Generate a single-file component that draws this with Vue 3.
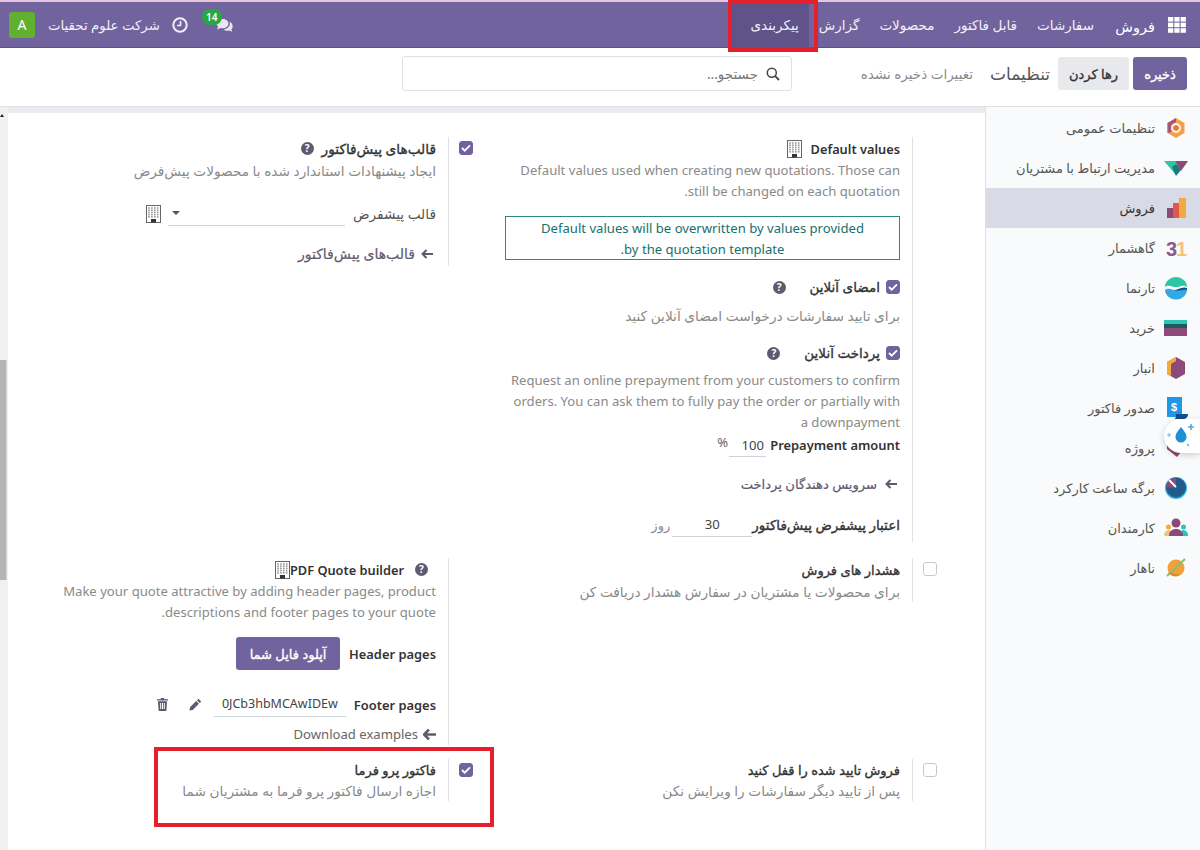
<template>
  <div class="app" dir="rtl">
    <nav class="topbar">
      <div class="nav-main">
        <span class="apps">
          <svg width="18" height="16" viewBox="0 0 18 16">
            <g fill="#fff">
              <rect v-for="c in gridCells" :key="c.k" :x="c.x" :y="c.y" width="5.300" height="4.600" />
            </g>
          </svg>
        </span>
        <span class="brand">فروش</span>
        <span v-for="item in navItems" :key="item" class="nav-item" :class="{ active: item === 'پیکربندی' }">{{ item }}</span>
      </div>
      <div class="systray">
        <span class="chat">
          <svg width="18" height="14" viewBox="0 0 18 14">
            <path d="M6.500 1C3.200 1 .6 3 .6 5.500c0 1.200.6 2.300 1.600 3.100L1 11.500l3.300-1.500c.7.200 1.400.3 2.200.3 3.300 0 5.900-2 5.900-4.800S9.800 1 6.500 1z" fill="#e9e6f2" />
            <path d="M13.500 3.500c.3.600.4 1.300.4 2 0 3-2.700 5.500-6.300 5.900 1 .9 2.400 1.400 3.900 1.400.6 0 1.200-.1 1.700-.2l3 1.200-.9-2.500c.9-.8 1.400-1.800 1.400-2.900 0-2-1.300-3.800-3.200-4.900z" fill="#e9e6f2" />
          </svg>
          <b class="badge">14</b>
        </span>
        <svg class="clock" width="16" height="16" viewBox="0 0 16 16">
          <circle cx="8" cy="8" r="6.700" fill="none" stroke="#f1eff6" stroke-width="2" />
          <path d="M8.500 4v4.500H5" fill="none" stroke="#f1eff6" stroke-width="1.600" />
        </svg>
        <span class="company">شرکت علوم تحقیات</span>
        <span class="avatar">A</span>
      </div>
    </nav>

    <header class="control">
      <div class="control-left">
        <button class="btn btn-save">ذخیره</button>
        <button class="btn btn-discard">رها کردن</button>
        <span class="page-title">تنظیمات</span>
        <span class="unsaved">تغییرات ذخیره نشده</span>
      </div>
      <div class="search">
        <svg width="14" height="14" viewBox="0 0 14 14">
          <circle cx="5.800" cy="5.800" r="4.500" fill="none" stroke="#444" stroke-width="1.500" />
          <path d="M9.200 9.200L13 13" stroke="#444" stroke-width="1.800" />
        </svg>
        <span>جستجو...</span>
      </div>
    </header>

    <div class="body">
      <aside class="sidebar">
        <div v-for="app in apps" :key="app.name" class="side-item" :class="{ selected: app.name === 'فروش' }">
          <svg class="side-icon" width="24" height="24" viewBox="0 0 24 24" v-html="app.icon"></svg>
          <span>{{ app.name }}</span>
        </div>
      </aside>

      <main class="content">
        <div class="settings">
          <!-- row 1 -->
          <div class="row row-one">
            <section class="cell">
              <div class="check-col"></div>
              <div class="pane tall">
                <div class="title">
                  <span class="en-title">Default values</span>
                  <svg class="bld" width="15" height="18" viewBox="0 0 15 18"><use href="#building" /></svg>
                </div>
                <p class="muted en">Default values used when creating new quotations. Those can still be changed on each quotation.</p>
                <div class="notice">Default values will be overwritten by values provided by the quotation template.</div>

                <div class="opt-title first-opt">
                  <span class="check on"><svg width="10" height="8" viewBox="0 0 10 8"><path d="M1 4l2.700 2.700L9 1.300" fill="none" stroke="#fff" stroke-width="1.800" /></svg></span>
                  <strong class="fa-bold">امضای آنلاین</strong>
                  <span class="help wide">?</span>
                </div>
                <p class="muted fa opt-desc">برای تایید سفارشات درخواست امضای آنلاین کنید</p>

                <div class="opt-title second-opt">
                  <span class="check on"><svg width="10" height="8" viewBox="0 0 10 8"><path d="M1 4l2.700 2.700L9 1.300" fill="none" stroke="#fff" stroke-width="1.800" /></svg></span>
                  <strong class="fa-bold">پرداخت آنلاین</strong>
                  <span class="help wide">?</span>
                </div>
                <p class="muted en pay-desc">Request an online prepayment from your customers to confirm orders. You can ask them to fully pay the order or partially with a downpayment</p>
                <div class="field-line prepay">
                  <strong>Prepayment amount</strong>
                  <span class="small-input w-100">100</span>
                  <span class="pct">%</span>
                </div>
                <div class="link pay-link">
                  <svg class="arrow" width="12" height="10" viewBox="0 0 12 10"><path d="M5.500 1L1.500 5l4 4M2 5h10" fill="none" stroke="#5f5a70" stroke-width="2" /></svg>
                  <span>سرویس دهندگان پرداخت</span>
                </div>
                <div class="field-line validity">
                  <strong class="fa-bold">اعتبار پیشفرض پیش‌فاکتور</strong>
                  <span class="small-input w-30">30</span>
                  <span class="muted-fa">روز</span>
                </div>
              </div>
            </section>

            <section class="cell">
              <div class="check-col"><span class="check on"><svg width="10" height="8" viewBox="0 0 10 8"><path d="M1 4l2.700 2.700L9 1.300" fill="none" stroke="#fff" stroke-width="1.800" /></svg></span></div>
              <div class="pane tpl-pane">
                <div class="title tpl-title">
                  <strong class="fa-bold">قالب‌های پیش‌فاکتور</strong>
                  <span class="help">?</span>
                </div>
                <p class="muted fa">ایجاد پیشنهادات استاندارد شده با محصولات پیش‌فرض</p>
                <div class="field-line tpl">
                  <span class="fa">قالب پیشفرض</span>
                  <span class="select"><i class="caret"></i></span>
                  <svg class="bld" width="15" height="18" viewBox="0 0 15 18"><use href="#building" /></svg>
                </div>
                <div class="link tpl-link">
                  <svg class="arrow" width="12" height="10" viewBox="0 0 12 10"><path d="M5.500 1L1.500 5l4 4M2 5h10" fill="none" stroke="#5f5a70" stroke-width="2" /></svg>
                  <span>قالب‌های پیش‌فاکتور</span>
                </div>
              </div>
            </section>
          </div>

          <!-- row 2 -->
          <div class="row row-two">
            <section class="cell">
              <div class="check-col"><span class="check"></span></div>
              <div class="pane">
                <div class="title"><strong class="fa-bold">هشدار های فروش</strong></div>
                <p class="muted fa">برای محصولات یا مشتریان در سفارش هشدار دریافت کن</p>
              </div>
            </section>

            <section class="cell">
              <div class="check-col"></div>
              <div class="pane">
                <div class="title pdf">
                  <span class="help first">?</span>
                  <span class="en-title" dir="ltr">PDF Quote builder</span>
                  <svg class="bld" width="15" height="18" viewBox="0 0 15 18"><use href="#building" /></svg>
                </div>
                <p class="muted en">Make your quote attractive by adding header pages, product descriptions and footer pages to your quote.</p>
                <div class="field-line head-pages">
                  <strong>Header pages</strong>
                  <button class="btn btn-upload">آپلود فایل شما</button>
                </div>
                <div class="field-line foot-pages">
                  <strong>Footer pages</strong>
                  <span class="small-input w-file" dir="ltr">0JCb3hbMCAwIDEw</span>
                  <svg class="tool pencil" width="13" height="13" viewBox="0 0 13 13"><path d="M9.500.8l2.700 2.700-1.500 1.500L8 2.300zM7.200 3.100l2.700 2.700-6.200 6.200L.5 12.500 1 9.300z" fill="#5f5a70" /></svg>
                  <svg class="tool trash" width="11" height="13" viewBox="0 0 11 13"><path d="M4 0h3l.5 1.200H11v1.300H0V1.200h3.500zM1 3.300h9l-.6 9.700H1.600zM3.200 5v6h1V5zm1.800 0v6h1V5zm1.800 0v6h1V5z" fill="#5f5a70" fill-rule="evenodd" /></svg>
                </div>
                <div class="link dl-link">
                  <svg class="arrow" width="13" height="11" viewBox="0 0 13 11"><path d="M6 .5L1 5.500l5 5M2 5.500h11" fill="none" stroke="#5f5a70" stroke-width="2.600" /></svg>
                  <span dir="ltr">Download examples</span>
                </div>
              </div>
            </section>
          </div>

          <!-- row 3 -->
          <div class="row row-three">
            <section class="cell">
              <div class="check-col"><span class="check"></span></div>
              <div class="pane">
                <div class="title"><strong class="fa-bold">فروش تایید شده را قفل کنید</strong></div>
                <p class="muted fa">پس از تایید دیگر سفارشات را ویرایش نکن</p>
              </div>
            </section>
            <section class="cell">
              <div class="check-col"><span class="check on"><svg width="10" height="8" viewBox="0 0 10 8"><path d="M1 4l2.700 2.700L9 1.300" fill="none" stroke="#fff" stroke-width="1.800" /></svg></span></div>
              <div class="pane">
                <div class="title"><strong class="fa-bold">فاکتور پرو فرما</strong></div>
                <p class="muted fa">اجازه ارسال فاکتور پرو فرما به مشتریان شما</p>
              </div>
            </section>
          </div>
        </div>
      </main>

      <div class="scroll-strip"><i class="scroll-up"></i><i class="thumb"></i></div>
    </div>

    <div class="drop-widget">
      <svg width="32" height="26" viewBox="0 0 32 26">
        <path d="M15 4c3 4 5.500 6.500 5.500 10a5.500 5.500 0 0 1-11 0C9.500 10.500 12 8 15 4z" fill="#1f8fd6" />
        <path d="M25 1v6M22 4h6" stroke="#5aa9d8" stroke-width="1.600" />
        <path d="M3 10v4M1 12h4" stroke="#7dbde0" stroke-width="1.200" />
        <circle cx="22" cy="22" r="1.200" fill="#7dbde0" />
      </svg>
    </div>

    <div class="mark mark-nav"></div>
    <div class="mark mark-row"></div>

    <svg width="0" height="0" class="defs">
      <symbol id="building" viewBox="0 0 15 18">
        <rect x=".5" y=".5" width="14" height="17" fill="#fff" stroke="#666" />
        <g fill="#999">
          <rect v-for="c in windowCells" :key="c.k" :x="c.x" :y="c.y" width="1.600" height="1.600" />
        </g>
        <rect x="5" y="14" width="5" height="3.500" fill="#333" />
      </symbol>
    </svg>
  </div>
</template>

<script setup>
const navItems = ['سفارشات', 'قابل فاکتور', 'محصولات', 'گزارش', 'پیکربندی']

const gridCells = []
for (let r = 0; r < 3; r++) {
  for (let c = 0; c < 3; c++) {
    gridCells.push({ k: r + '-' + c, x: c * 6.3, y: r * 5.6 })
  }
}

const windowCells = []
for (let r = 0; r < 5; r++) {
  for (let c = 0; c < 4; c++) {
    windowCells.push({ k: r + '-' + c, x: 2.2 + c * 2.9, y: 2.2 + r * 2.2 })
  }
}

const apps = [
  { name: 'تنظیمات عمومی', icon: '<path d="M12 2l8.500 5v10L12 22l-8.500-5V7z" fill="#f0a24a"/><path d="M3.500 7L12 2v4L7.500 9v7l-4 1z" fill="#a5567e"/><circle cx="12" cy="12" r="5" fill="#fbeedd"/><circle cx="12" cy="12" r="2.800" fill="#e8762c"/>' },
  { name: 'مدیریت ارتباط با مشتریان', icon: '<path d="M0 5h11l5 7-4 7z" fill="#2ec4a6"/><path d="M11 5h13l-7 10z" fill="#8c4a78"/><path d="M8 11l4-3 5 6-5 6z" fill="#1d7a78"/>' },
  { name: 'فروش', icon: '<rect x="3" y="12" width="7" height="10" fill="#8c4a78"/><rect x="9" y="7" width="7" height="15" fill="#e2574c"/><rect x="15" y="2" width="7" height="20" fill="#f4a93c"/>' },
  { name: 'گاهشمار', icon: '<text x="2" y="20" font-size="20" font-weight="700" font-family="Liberation Sans" fill="#8c5a8c" direction="ltr">3</text><text x="12" y="20" font-size="20" font-weight="700" font-family="Liberation Sans" fill="#f4c27a" direction="ltr">1</text>' },
  { name: 'تارنما', icon: '<path d="M1 11a11 10 0 0 1 22 0c-4-3-7 0-11 0S5 8 1 11z" fill="#2ec4a6"/><path d="M1 14c4-3 7 0 11 0s7-3 11-1a11 10 0 0 1-22 1z" fill="#32a9e4"/><path d="M10 14c4 0 8-4 13-2v2c-4-1-8 2-13 0z" fill="#1d4f80"/>' },
  { name: 'خرید', icon: '<rect x="0" y="4" width="23" height="5" fill="#2ec4b6"/><rect x="0" y="8" width="23" height="4" fill="#1d5a5e"/><rect x="0" y="12" width="23" height="8" fill="#8c4a78"/>' },
  { name: 'انبار', icon: '<path d="M12 1l9 5v12l-9 5-9-5V6z" fill="#8c4a78"/><path d="M12 1L3 6v12l4 2V8l5-3z" fill="#f4a93c"/>' },
  { name: 'صدور فاکتور', icon: '<path d="M3 1h15v20H3z" fill="#1f96e6"/><path d="M12 18h12c0 3-2 5-5 5h-9c2 0 2-3 2-5z" fill="#134d8c"/><text x="7" y="15" font-size="11" font-weight="700" font-family="Liberation Sans" fill="#fff" direction="ltr">$</text>' },
  { name: 'پروژه', icon: '<path d="M3 3h10l8 8-8 10-10-8z" fill="#8c4a78"/>' },
  { name: 'برگه ساعت کارکرد', icon: '<circle cx="12" cy="12" r="11" fill="#32b4e4"/><circle cx="12" cy="11.500" r="10" fill="#1f5c8c"/><path d="M2 11.500A10 10 0 0 1 12 1.500L12 11.500z" fill="#8c4a78"/><path d="M5 4l7 7" stroke="#fff" stroke-width="2"/>' },
  { name: 'کارمندان', icon: '<circle cx="12" cy="7" r="4.500" fill="#8c4a78"/><circle cx="4.500" cy="11" r="2.500" fill="#f4a93c"/><circle cx="19.500" cy="11" r="2.500" fill="#2ec4b6"/><path d="M0 20c0-5 3-6 6-6v6z" fill="#f4c27a"/><path d="M24 20c0-5-3-6-6-6v6z" fill="#2ec4b6"/><path d="M5 20c0-5 3-7 7-7s7 2 7 7z" fill="#8c4a78"/>' },
  { name: 'ناهار', icon: '<circle cx="12" cy="12" r="8.500" fill="#f0a13c"/><path d="M3 20L21 3" stroke="#8cbf6e" stroke-width="2"/><path d="M4 16a8.500 8.500 0 0 0 12 3z" fill="#d98a2c"/>' }
]
</script>

<style>
html,
body {
  margin: 0;
  background: #fff;
}
</style>

<style scoped>
.app {
  position: relative;
  width: 1200px;
  height: 850px;
  overflow: hidden;
  display: flex;
  flex-direction: column;
  font-family: "Noto Sans", "DejaVu Sans", sans-serif;
  font-size: 13.1px;
  color: #4a4a4a;
}

.defs {
  position: absolute;
}

.topbar {
  height: 45px;
  border-top: 2px solid #e8c4de;
  background: #71639e;
  border-bottom: 1px solid #5e5284;
  flex: none;
  display: flex;
  justify-content: space-between;
  align-items: stretch;
  color: #fff;
  padding: 0 14px 0 9px;
}

.nav-main {
  display: flex;
  align-items: center;
}

.apps {
  display: flex;
  width: 31px;
}

.brand {
  font-size: 14.500px;
  width: 51px;
  padding-top: 2px;
}

.nav-item {
  height: 100%;
  display: flex;
  align-items: center;
  padding: 0 10px;
  color: #f2f0f7;
  font-size: 13.500px;
}

.nav-item.active {
  background: #5f5389;
  padding-left: 20px;
}

.systray {
  display: flex;
  align-items: center;
  gap: 12px;
}

.chat {
  position: relative;
  display: flex;
  margin-left: 16px;
}

.badge {
  position: absolute;
  top: -9px;
  right: 12px;
  width: 20px;
  height: 16px;
  line-height: 16px;
  border-radius: 10px;
  background: #28a745;
  color: #fff;
  font-size: 10px;
  font-weight: 600;
  text-align: center;
}

.company {
  color: #f2f0f7;
  font-size: 13.300px;
}

.avatar {
  width: 26px;
  height: 26px;
  line-height: 26px;
  border-radius: 3px;
  background: #62b030;
  text-align: center;
  font-size: 14px;
  margin-right: 1px;
}

.control {
  height: 51px;
  flex: none;
  border-bottom: 1px solid #dee2e6;
  background: #fff;
  display: flex;
  align-items: center;
  padding: 0 13px 7px;
}

.control-left {
  width: 395px;
  display: flex;
  align-items: center;
}

.btn {
  border: 0;
  border-radius: 3px;
  font-family: inherit;
  font-size: 13px;
  font-weight: 400;
  -webkit-text-stroke: 0.35px currentColor;
  height: 33px;
  padding: 0;
}

.btn-save {
  width: 54px;
  background: #71639e;
  color: #fff;
}

.btn-discard {
  width: 71px;
  margin-right: 4px;
  background: #e7e9ed;
  color: #333;
}

.page-title {
  font-size: 17px;
  margin-right: 8px;
  color: #555;
}

.unsaved {
  margin-right: 17px;
  color: #8a8a8a;
  font-size: 13.500px;
}

.search {
  height: 33px;
  border: 1px solid #dee2e6;
  border-radius: 3px;
  display: flex;
  align-items: center;
  gap: 8px;
  padding: 0 11px;
  color: #777;
  font-size: 13.500px;
  width: 366px;
}

.body {
  flex: 1;
  display: flex;
  min-height: 0;
}

.sidebar {
  width: 214px;
  flex: none;
  background: #f9fafb;
  border-left: 1px solid #dee2e6;
  padding-top: 1px;
}

.side-item {
  height: 40px;
  display: flex;
  align-items: center;
  gap: 9px;
  padding-right: 12px;
  font-size: 13px;
  color: #555;
}

.side-item.selected {
  background: #d8dae6;
  color: #333;
}

.side-icon {
  flex: none;
}

.content {
  flex: 1;
  background: #fff;
  border-top: 6px solid #e9ecef;
  padding: 24px 48px 0 0;
}

.scroll-strip {
  width: 8px;
  flex: none;
  background: #f0f0f0;
  position: relative;
}

.scroll-up {
  position: absolute;
  top: 7px;
  left: 0;
  border-bottom: 3px solid #222;
  border-left: 2px solid transparent;
  border-right: 2px solid transparent;
}

.thumb {
  position: absolute;
  top: 253px;
  left: 0;
  width: 6px;
  height: 220px;
  background: #b5b5b5;
  border-right: 1px solid #d6d6d6;
}

.row {
  display: grid;
  grid-template-columns: 464px 464px;
}

.row-two {
  margin-top: 16px;
}

.row-three {
  margin-top: 14px;
}

.row-three .title {
  height: 21px;
}

.cell {
  display: flex;
  align-items: flex-start;
  padding-left: 32px;
}

.check-col {
  width: 24px;
  flex: none;
}

.check {
  display: flex;
  align-items: center;
  justify-content: center;
  width: 14px;
  height: 14px;
  box-sizing: border-box;
  border: 1px solid #c7c9cd;
  border-radius: 3px;
  background: #fff;
  flex: none;
  margin-top: 4px;
}

.check.on {
  background: #71639e;
  border-color: #71639e;
}

.pane {
  flex: 1;
  border-right: 1px solid #dee2e6;
  padding-right: 12px;
  min-width: 0;
}

.tall {
  padding-bottom: 5px;
}

.title {
  display: flex;
  align-items: center;
  gap: 9px;
  height: 23px;
  font-weight: 600;
  color: #333;
}

.en-title {
  font-size: 12.800px;
}

.title strong,
.opt-title strong {
  font-weight: 600;
}

.title .fa-bold,
.opt-title .fa-bold,
.field-line .fa-bold {
  font-weight: 400;
  font-size: 13px;
  -webkit-text-stroke: 0.35px currentColor;
  color: #333;
}

.opt-title .fa-bold,
.field-line .fa-bold {
  font-size: 13.500px;
}

.title.tpl-title .fa-bold {
  font-size: 13.700px;
}

.tpl-title {
  gap: 8px;
}

.fa {
  font-size: 13.700px;
}

.muted {
  margin: 0;
  color: #8a8a8a;
  line-height: 21px;
}

.notice {
  margin-top: 14px;
  box-sizing: border-box;
  height: 44px;
  border: 1px solid #2b8a85;
  color: #17706e;
  line-height: 21px;
  text-align: center;
  padding: 1px 35px 0;
}

.opt-title {
  display: flex;
  align-items: center;
  gap: 6px;
  height: 22px;
  color: #333;
}

.first-opt,
.second-opt {
  margin-top: 16px;
}

.opt-title .check {
  margin-top: 0;
}

.opt-desc {
  margin-top: 7px;
}

.pay-desc {
  margin-top: 6px;
}

.help {
  display: inline-block;
  width: 13px;
  height: 13px;
  line-height: 13px;
  border-radius: 50%;
  background: #5f5a70;
  color: #fff;
  text-align: center;
  font-size: 10px;
  font-weight: 700;
}

.help.wide {
  margin-right: 18px;
}

.field-line {
  display: flex;
  align-items: center;
}

.field-line strong {
  font-size: 12.900px;
  font-weight: 600;
  color: #333;
}

.prepay {
  height: 22px;
  margin-top: 1px;
}

.small-input {
  display: inline-block;
  text-align: center;
  border-bottom: 1px solid #cfd3d8;
  height: 24px;
  line-height: 24px;
  color: #444;
}

.w-100 {
  box-sizing: border-box;
  width: 37px;
  margin-right: 4px;
  padding-left: 10px;
}

.pct {
  margin-right: 1px;
  color: #666;
  margin-top: -6px;
}

.link {
  display: flex;
  align-items: center;
  gap: 8px;
  color: #5f5a70;
  font-weight: 400;
  -webkit-text-stroke: 0.2px currentColor;
}

.arrow {
  flex: none;
}

.pay-link {
  margin-top: 19px;
  padding-right: 3px;
}

.validity {
  margin-top: 19px;
}

.w-30 {
  width: 80px;
}

.muted-fa {
  color: #8a8a8a;
  margin-right: 2px;
}

.tpl {
  margin-top: 20px;
  color: #555;
}

.select {
  position: relative;
  display: block;
  width: 177px;
  height: 24px;
  border-bottom: 1px solid #cfd3d8;
  margin-right: 8px;
}

.caret {
  position: absolute;
  left: 4px;
  top: 10px;
  border-top: 4px solid #555;
  border-left: 4px solid transparent;
  border-right: 4px solid transparent;
}

.tpl .bld {
  margin-right: 7px;
}

.tpl-link {
  margin-top: 18px;
  padding-right: 3px;
  padding-bottom: 3px;
  gap: 6px;
  font-size: 14px;
}

.pdf {
  gap: 0;
  padding-right: 2px;
}

.help.first {
  margin-left: 11px;
  margin-right: 6px;
}

.head-pages {
  margin-top: 14px;
  gap: 9px;
}

.btn-upload {
  width: 104px;
  background: #71639e;
  color: #fff;
}

.foot-pages {
  margin-top: 22px;
}

.w-file {
  width: 132px;
  margin-right: 8px;
  font-size: 12.500px;
}

.pencil {
  margin-right: 12px;
}

.trash {
  margin-right: 21px;
}

.dl-link {
  margin-top: 6px;
  gap: 5px;
  -webkit-text-stroke: 0;
  color: #666;
  height: 22px;
}

.drop-widget {
  position: absolute;
  top: 419px;
  right: 0;
  width: 36px;
  height: 34px;
  background: #fff;
  border-radius: 17px 0 0 17px;
  box-shadow: 0 2px 6px rgba(0, 0, 0, 0.18);
  display: flex;
  align-items: center;
  justify-content: center;
}

.mark {
  position: absolute;
  border: 4px solid #e4202c;
  box-sizing: border-box;
}

.mark-nav {
  left: 728px;
  top: 0;
  width: 90px;
  height: 52px;
}

.mark-row {
  left: 154px;
  top: 747px;
  width: 340px;
  height: 80px;
}
</style>
